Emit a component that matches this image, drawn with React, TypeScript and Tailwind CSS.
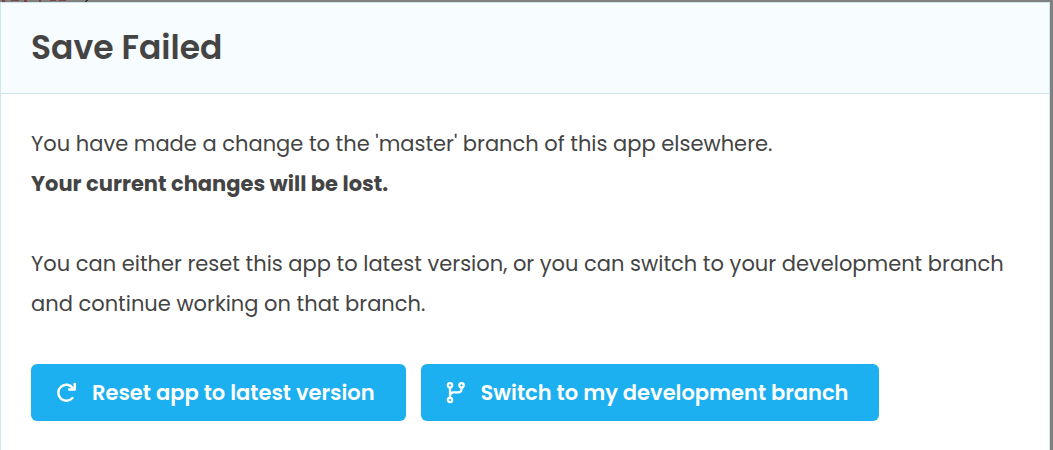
import React from "react";

function ResetIcon() {
  return (
    <svg viewBox="0 0 20 20" className="h-5 w-5 shrink-0" fill="none" stroke="currentColor" strokeWidth="2.5" aria-hidden="true">
      <path d="M16.4 15A8 8 0 1 1 16.9 5.2" strokeLinecap="round" />
      <path d="M18.8 .5v6h-5.6" strokeLinejoin="round" strokeLinecap="round" />
    </svg>
  );
}

function BranchIcon() {
  return (
    <svg viewBox="0 0 19 22" className="h-[22px] w-[19px] shrink-0" fill="none" stroke="currentColor" strokeWidth="2.2" aria-hidden="true">
      <circle cx="4" cy="3.3" r="2.2" />
      <circle cx="15.6" cy="3.3" r="2.2" />
      <circle cx="4" cy="18" r="2.2" />
      <path d="M4 5.6v10.1M15.6 5.6v1.2q0 3.6-3.6 3.6H7.6q-3.6 0-3.6 3" />
    </svg>
  );
}

function ActionButton({ icon, children }: { icon: React.ReactNode; children: React.ReactNode }) {
  return (
    <button type="button" className="flex h-[57px] items-center gap-4 rounded-md bg-[#1cb0f0] pl-[25px] pr-[31px] text-[21px] leading-7 font-semibold text-white">
      {icon}
      <span>{children}</span>
    </button>
  );
}

export default function App() {
  return (
    <div className="min-h-screen bg-[#808080] font-['Poppins','Inter',sans-serif] text-[#444]">
      <svg className="block h-[2px] w-24" viewBox="0 0 96 2" fill="#7c4543" aria-hidden="true">
        <path d="M2 0h3v2h-3zM11 0h8v1h-8zM24 0h3v2h-3zM39 0h2v2h-2zM50 0h6v1h-6zM59 0h7v1h-7z" />
        <path d="M86 0h2v1h-1v1h-2v-1h1z" fill="#333" />
      </svg>
      <div className="pr-[3px]">
        <section role="dialog" aria-labelledby="dialog-title" className="min-h-[calc(100vh-2px)] border border-b-0 border-[#d3e5ec] bg-white">
          <header className="border-b border-[#d3e5ec] bg-[#f7fcff] px-[30px] py-[21px]">
            <h1 id="dialog-title" className="text-[33px] leading-12 font-semibold">Save Failed</h1>
          </header>
          <div className="px-[30px] pt-[30px] text-[21px] leading-10">
            <p>
              You have made a change to the 'master' branch of this app elsewhere.
              <br />
              <strong className="font-bold">Your current changes will be lost.</strong>
            </p>
            <p className="mt-10">
              You can either reset this app to latest version, or you can switch to your development branch and continue working on that branch.
            </p>
            <div className="mt-10 flex flex-wrap gap-[15px]">
              <ActionButton icon={<ResetIcon />}>Reset app to latest version</ActionButton>
              <ActionButton icon={<BranchIcon />}>Switch to my development branch</ActionButton>
            </div>
          </div>
        </section>
      </div>
    </div>
  );
}
